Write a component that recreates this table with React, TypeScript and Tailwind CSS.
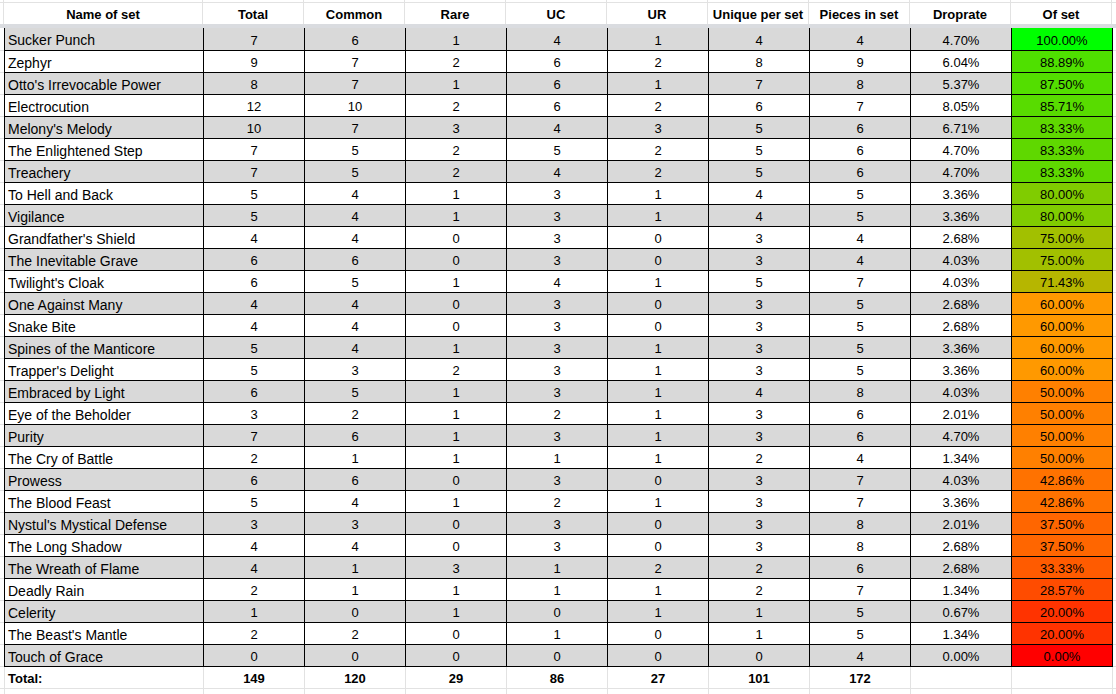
import React from "react";

type Row = [string, number, number, number, number, number, number, number, string, string, string];

const rows: Row[] = [
  ["Sucker Punch", 7, 6, 1, 4, 1, 4, 4, "4.70%", "100.00%", "#00ff00"],
  ["Zephyr", 9, 7, 2, 6, 2, 8, 9, "6.04%", "88.89%", "#4fe000"],
  ["Otto's Irrevocable Power", 8, 7, 1, 6, 1, 7, 8, "5.37%", "87.50%", "#53de00"],
  ["Electrocution", 12, 10, 2, 6, 2, 6, 7, "8.05%", "85.71%", "#58dc00"],
  ["Melony's Melody", 10, 7, 3, 4, 3, 5, 6, "6.71%", "83.33%", "#5fd800"],
  ["The Enlightened Step", 7, 5, 2, 5, 2, 5, 6, "4.70%", "83.33%", "#5fd800"],
  ["Treachery", 7, 5, 2, 4, 2, 5, 6, "4.70%", "83.33%", "#5fd800"],
  ["To Hell and Back", 5, 4, 1, 3, 1, 4, 5, "3.36%", "80.00%", "#80cc00"],
  ["Vigilance", 5, 4, 1, 3, 1, 4, 5, "3.36%", "80.00%", "#80cc00"],
  ["Grandfather's Shield", 4, 4, 0, 3, 0, 3, 4, "2.68%", "75.00%", "#a2c000"],
  ["The Inevitable Grave", 6, 6, 0, 3, 0, 3, 4, "4.03%", "75.00%", "#a2c000"],
  ["Twilight's Cloak", 6, 5, 1, 4, 1, 5, 7, "4.03%", "71.43%", "#b6b600"],
  ["One Against Many", 4, 4, 0, 3, 0, 3, 5, "2.68%", "60.00%", "#ff9900"],
  ["Snake Bite", 4, 4, 0, 3, 0, 3, 5, "2.68%", "60.00%", "#ff9900"],
  ["Spines of the Manticore", 5, 4, 1, 3, 1, 3, 5, "3.36%", "60.00%", "#ff9900"],
  ["Trapper's Delight", 5, 3, 2, 3, 1, 3, 5, "3.36%", "60.00%", "#ff9900"],
  ["Embraced by Light", 6, 5, 1, 3, 1, 4, 8, "4.03%", "50.00%", "#ff8000"],
  ["Eye of the Beholder", 3, 2, 1, 2, 1, 3, 6, "2.01%", "50.00%", "#ff8000"],
  ["Purity", 7, 6, 1, 3, 1, 3, 6, "4.70%", "50.00%", "#ff8000"],
  ["The Cry of Battle", 2, 1, 1, 1, 1, 2, 4, "1.34%", "50.00%", "#ff8000"],
  ["Prowess", 6, 6, 0, 3, 0, 3, 7, "4.03%", "42.86%", "#ff7200"],
  ["The Blood Feast", 5, 4, 1, 2, 1, 3, 7, "3.36%", "42.86%", "#ff7200"],
  ["Nystul's Mystical Defense", 3, 3, 0, 3, 0, 3, 8, "2.01%", "37.50%", "#ff6600"],
  ["The Long Shadow", 4, 4, 0, 3, 0, 3, 8, "2.68%", "37.50%", "#ff6600"],
  ["The Wreath of Flame", 4, 1, 3, 1, 2, 2, 6, "2.68%", "33.33%", "#ff5b00"],
  ["Deadly Rain", 2, 1, 1, 1, 1, 2, 7, "1.34%", "28.57%", "#ff4c00"],
  ["Celerity", 1, 0, 1, 0, 1, 1, 5, "0.67%", "20.00%", "#ff3300"],
  ["The Beast's Mantle", 2, 2, 0, 1, 0, 1, 5, "1.34%", "20.00%", "#ff3300"],
  ["Touch of Grace", 0, 0, 0, 0, 0, 0, 4, "0.00%", "0.00%", "#ff0000"],
];

const headers = ["Total", "Common", "Rare", "UC", "UR", "Unique per set", "Pieces in set", "Droprate", "Of set"];
const totals = ["149", "120", "29", "86", "27", "101", "172", "", ""];

export default function App() {
  return (
    <div
      className="w-[1116px] h-[694px] overflow-hidden bg-white text-[13px] text-black"
      style={{ fontFamily: '"Liberation Sans", Arial, sans-serif' }}
    >
      {/* top strip */}
      <div className="flex h-[2px]">
        <div className="w-[4px] shrink-0 border-r border-[#e2e2e2]" />
        <div className="w-[199px] shrink-0 border-r border-[#e2e2e2]" />
        {headers.map((h) => (
          <div key={h} className="w-[101px] shrink-0 border-r border-[#e2e2e2]" />
        ))}
      </div>
      {/* header */}
      <div className="flex h-[22px] border-t border-[#e2e2e2] font-bold">
        <div className="w-[4px] shrink-0 border-r border-[#e2e2e2]" />
        <div className="w-[199px] shrink-0 border-r border-[#e2e2e2] flex items-center justify-center pt-[2px]">Name of set</div>
        {headers.map((h) => (
          <div key={h} className="w-[101px] shrink-0 border-r border-[#e2e2e2] flex items-center justify-center whitespace-nowrap pt-[2px]">
            {h}
          </div>
        ))}
      </div>
      {/* frozen divider */}
      <div className="h-[4px] bg-[#dadce0]" />
      {/* data rows */}
      {rows.map((r, i) => {
        const bg = i % 2 === 0 ? "bg-[#d9d9d9]" : "bg-white";
        const h = i === 0 ? "h-[23px]" : "h-[22px]";
        return (
          <div key={r[0]} className={`flex ${h}`}>
            <div className="w-[4px] shrink-0 border-b border-[#e2e2e2]" />
            <div className={`w-[200px] shrink-0 border-l border-r border-b border-black ${bg} flex items-center pl-[3px] pt-[3px] whitespace-nowrap text-[14px]`}>
              {r[0]}
            </div>
            {r.slice(1, 9).map((v, j) => (
              <div key={j} className={`w-[101px] shrink-0 border-r border-b border-black ${bg} flex items-center justify-center pt-[3px]`}>
                {v}
              </div>
            ))}
            <div
              className="w-[101px] shrink-0 border-r border-b border-black flex items-center justify-center pt-[3px]"
              style={{ backgroundColor: r[10] }}
            >
              {r[9]}
            </div>
            <div className="flex-1 border-b border-[#e2e2e2]" />
          </div>
        );
      })}
      {/* total row */}
      <div className="flex h-[22px] font-bold">
        <div className="w-[4px] shrink-0 border-b border-[#e2e2e2]" />
        <div className="w-[200px] shrink-0 border-l border-r border-b border-[#e2e2e2] flex items-center pl-[3px] pt-[3px]">Total:</div>
        {totals.map((t, j) => (
          <div key={j} className="w-[101px] shrink-0 border-r border-b border-[#e2e2e2] flex items-center justify-center pt-[3px]">
            {t}
          </div>
        ))}
        <div className="flex-1 border-b border-[#e2e2e2]" />
      </div>
      {/* trailing row */}
      <div className="flex h-[22px]">
        <div className="w-[4px] shrink-0" />
        <div className="w-[200px] shrink-0 border-l border-r border-[#e2e2e2]" />
        {totals.map((_, j) => (
          <div key={j} className="w-[101px] shrink-0 border-r border-[#e2e2e2]" />
        ))}
      </div>
    </div>
  );
}
